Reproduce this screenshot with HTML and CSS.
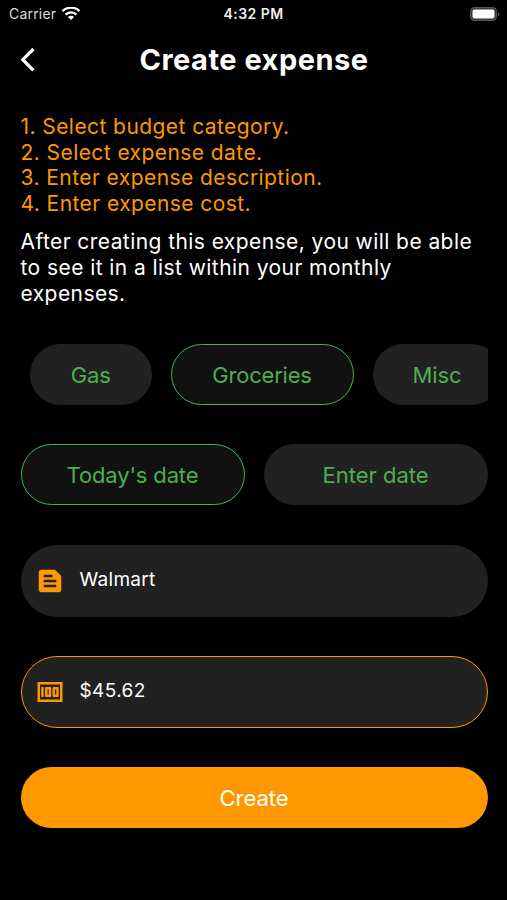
FILE: index.html
```html
<!DOCTYPE html>
<html lang="en">
<head>
<meta charset="utf-8">
<title>Create expense</title>
<link rel="stylesheet" href="styles.css">
</head>
<body>
<div class="status">
  <div class="carrier"><span>Carrier</span>
    <svg width="20" height="14" viewBox="0 0 20 14" fill="none" stroke="#fff" stroke-width="2.4"><path d="M1.500 4.200a12 12 0 0 1 17 0M4.600 7.600a7.600 7.600 0 0 1 10.800 0"/><path d="M10 13.100L7 10.100a4.200 4.200 0 0 1 6 0z" fill="#fff" stroke="none"/></svg>
  </div>
  <div class="time">4:32 PM</div>
  <svg class="battery" width="32" height="14" viewBox="0 0 32 14"><rect x="1.600" y=".600" width="25.800" height="12.800" rx="4" fill="#333" stroke="#555" stroke-width="1.200"/><rect x="3.500" y="2.500" width="22" height="9" rx="2" fill="#fff"/><path d="M29 4.800q3 2.200 0 4.400z" fill="#555"/></svg>
</div>
<header class="header">
  <svg class="back" width="16" height="26" viewBox="0 0 16 26" fill="none" stroke="#fff" stroke-width="3.200"><path d="M13.400 2L2.800 12.700l10.600 10.700"/></svg>
  <h1>Create expense</h1>
</header>
<main>
  <div class="steps"><p>1. Select budget category.</p><p>2. Select expense date.</p><p>3. Enter expense description.</p><p>4. Enter expense cost.</p></div>
  <div class="note"><p>After creating this expense, you will be able</p><p>to see it in a list within your monthly</p><p>expenses.</p></div>
  <div class="categories">
    <button class="pill gas">Gas</button><button class="pill groceries selected">Groceries</button><button class="pill misc">Misc</button>
  </div>
  <div class="dates"><button class="pill today selected">Today's date</button><button class="pill enter">Enter date</button></div>
  <div class="field">
    <svg width="30" height="30" viewBox="0 0 24 24" fill="#ff9800"><path d="M16 3H5c-1.100 0-2 .900-2 2v14c0 1.100.900 2 2 2h14c1.100 0 2-.900 2-2V8l-5-5zM7 7h7v2H7V7zm10 10H7v-2h10v2zm0-4H7v-2h10v2z"/></svg>
    <span>Walmart</span>
  </div>
  <div class="field active">
    <svg width="30" height="30" viewBox="0 0 24 24" fill="#ff9800"><path d="M15 16h3c.550 0 1-.450 1-1V9c0-.550-.450-1-1-1h-3c-.550 0-1 .450-1 1v6c0 .550.450 1 1 1zm1-6h1v4h-1v-4zM9 16h3c.550 0 1-.450 1-1V9c0-.550-.450-1-1-1H9c-.550 0-1 .450-1 1v6c0 .550.450 1 1 1zm1-6h1v4h-1v-4zM5 8h2v8H5zM2 4v16h20V4H2zm2 14V6h16v12H4z"/></svg>
    <span>$45.62</span>
  </div>
  <button class="create">Create</button>
</main>
</body>
</html>
```
FILE: styles.css
```css
* { box-sizing: border-box; }
body { margin: 0; width: 507px; height: 900px; overflow: hidden; background: #000; color: #fff; font-family: Inter, sans-serif; }
p, h1 { margin: 0; white-space: nowrap; }
button { font: inherit; border: 0; padding: 0; }
.status { height: 27px; padding: 0 6px 0 9px; display: grid; grid-template-columns: 1fr auto 1fr; align-items: center; font-size: 14px; }
.carrier { display: flex; align-items: center; gap: 5px; letter-spacing: .2px; color: #ddd; }
.time { font-weight: 600; letter-spacing: .45px; margin-right: 3px; color: #eee; }
.battery { justify-self: end; }
.header { height: 65px; padding: 0 20px; display: grid; grid-template-columns: 16px 1fr 16px; align-items: center; }
h1 { text-align: center; font-size: 29px; line-height: 34px; font-weight: 700; letter-spacing: .5px; padding-left: 1px; }
main { padding: 22px 19.500px 0 20.500px; display: flex; flex-direction: column; }
.steps, .note { font-size: 21px; line-height: 25.600px; letter-spacing: .43px; }
.steps { color: #ff9800; }
.note { margin-top: 13px; }
.categories { margin-top: 38.300px; padding-left: 9.500px; display: flex; gap: 19px; overflow: hidden; }
.pill { height: 61px; border-radius: 31px; background: #212121; color: #4caf50; font-size: 22px; letter-spacing: .1px; flex: none; }
.selected { background: #111; border: 1.500px solid #4caf50; }
.gas { width: 121.500px; letter-spacing: -.1px; }
.groceries { width: 183px; letter-spacing: -.2px; }
.misc { width: 129px; letter-spacing: -.1px; }
.today { letter-spacing: -.15px; }
.enter { letter-spacing: 0; }
.dates { margin-top: 39px; display: grid; grid-template-columns: 1fr 1fr; gap: 19px; }
.field { height: 72px; margin-top: 39.300px; padding: 0 14px; border-radius: 36px; background: #212121; display: flex; align-items: center; gap: 15px; font-size: 19px; letter-spacing: .3px; }
.field span { padding-bottom: 2px; }
.active { border: 1px solid #ff9800; padding: 0 13px; }
.active span { padding-bottom: 3.500px; letter-spacing: .4px; }
.create { height: 61px; margin-top: 39.300px; border-radius: 31px; background: #ff9800; color: #fff; font-size: 22px; letter-spacing: 0; }
```
